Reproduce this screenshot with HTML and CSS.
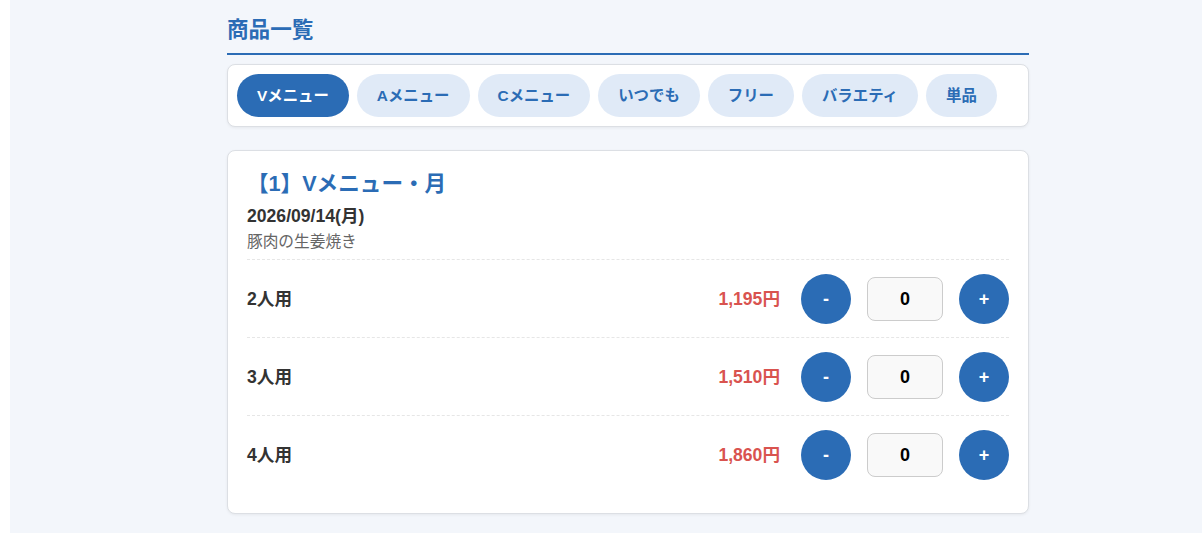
FILE: index.html
```html
<!DOCTYPE html>
<html lang="ja">
<head>
<meta charset="utf-8">
<title>商品一覧</title>
<link rel="stylesheet" href="styles.css">
</head>
<body>
<div class="page">
  <div class="inner">
    <h2 class="page-title">商品一覧</h2>
    <div class="tabs">
      <span class="tab active">Vメニュー</span>
      <span class="tab">Aメニュー</span>
      <span class="tab">Cメニュー</span>
      <span class="tab">いつでも</span>
      <span class="tab">フリー</span>
      <span class="tab">バラエティ</span>
      <span class="tab">単品</span>
    </div>
    <div class="card">
      <div class="card-head">
        <h3 class="card-title">【1】Vメニュー・月</h3>
        <div class="date">2026/09/14(月)</div>
        <div class="desc">豚肉の生姜焼き</div>
      </div>
      <div class="row">
        <span class="label">2人用</span>
        <span class="price">1,195円</span>
        <div class="qty">
          <button class="btn">-</button>
          <input class="num" type="text" value="0">
          <button class="btn">+</button>
        </div>
      </div>
      <div class="row">
        <span class="label">3人用</span>
        <span class="price">1,510円</span>
        <div class="qty">
          <button class="btn">-</button>
          <input class="num" type="text" value="0">
          <button class="btn">+</button>
        </div>
      </div>
      <div class="row">
        <span class="label">4人用</span>
        <span class="price">1,860円</span>
        <div class="qty">
          <button class="btn">-</button>
          <input class="num" type="text" value="0">
          <button class="btn">+</button>
        </div>
      </div>
    </div>
  </div>
</div>
</body>
</html>
```
FILE: styles.css
```css
* { box-sizing: border-box; }
html, body {
  margin: 0;
  padding: 0;
  background: #ffffff;
  font-family: "Liberation Sans", "Noto Sans CJK JP", sans-serif;
}
.page {
  margin-left: 10px;
  background: #f3f6fb;
  min-height: 533px;
  padding: 16px 0 20px;
}
.inner {
  width: 802px;
  margin-left: 217px;
}
.page-title {
  margin: 0;
  font-size: 21.6px;
  line-height: 28px;
  color: #2b6cb5;
  font-weight: bold;
  padding-bottom: 9px;
  border-bottom: 2px solid #2b6cb5;
}
.tabs {
  margin-top: 9px;
  background: #fff;
  border: 1px solid #dcdfe4;
  border-radius: 8px;
  box-shadow: 0 1px 3px rgba(0,0,0,0.06);
  padding: 9px 9px;
  display: flex;
  gap: 8px;
}
.tab {
  display: inline-block;
  height: 43px;
  line-height: 43px;
  padding: 0 20px;
  border-radius: 22px;
  background: #e0eaf7;
  color: #2b6cb5;
  font-weight: bold;
  font-size: 15.4px;
  white-space: nowrap;
}
.tab.active {
  background: #2b6cb5;
  color: #fff;
}
.card {
  margin-top: 23px;
  background: #fff;
  border: 1px solid #dcdfe4;
  border-radius: 8px;
  box-shadow: 0 1px 3px rgba(0,0,0,0.06);
  padding: 19px 19px 20px;
}
.card-head {
  padding-bottom: 7px;
}
.card-title {
  margin: 0;
  font-size: 21.6px;
  line-height: 28px;
  color: #2b6cb5;
  font-weight: bold;
}
.date {
  margin-top: 8px;
  font-size: 17.6px;
  line-height: 20px;
  font-weight: bold;
  color: #333;
}
.desc {
  margin-top: 6px;
  font-size: 15.7px;
  line-height: 20px;
  color: #666;
}
.row {
  display: flex;
  align-items: center;
  border-top: 1px dashed #e6e6e6;
  padding: 14px 0 13px;
}
.label {
  flex: 1;
  font-size: 17.6px;
  line-height: 20px;
  font-weight: bold;
  color: #333;
}
.price {
  font-size: 17.6px;
  line-height: 20px;
  font-weight: bold;
  color: #d9534f;
  margin-right: 21px;
}
.qty {
  display: flex;
  align-items: center;
  gap: 16px;
}
.btn {
  width: 50px;
  height: 50px;
  border-radius: 50%;
  border: none;
  background: #2b6cb5;
  color: #fff;
  font-family: "Liberation Sans", sans-serif;
  font-size: 18px;
  font-weight: bold;
  padding: 0;
}
.num {
  width: 76px;
  height: 44px;
  border: 1px solid #cccccc;
  border-radius: 8px;
  background: #f9f9f9;
  text-align: center;
  font-family: "Liberation Sans", sans-serif;
  font-size: 18px;
  font-weight: bold;
  color: #000;
  padding: 0;
}
```
